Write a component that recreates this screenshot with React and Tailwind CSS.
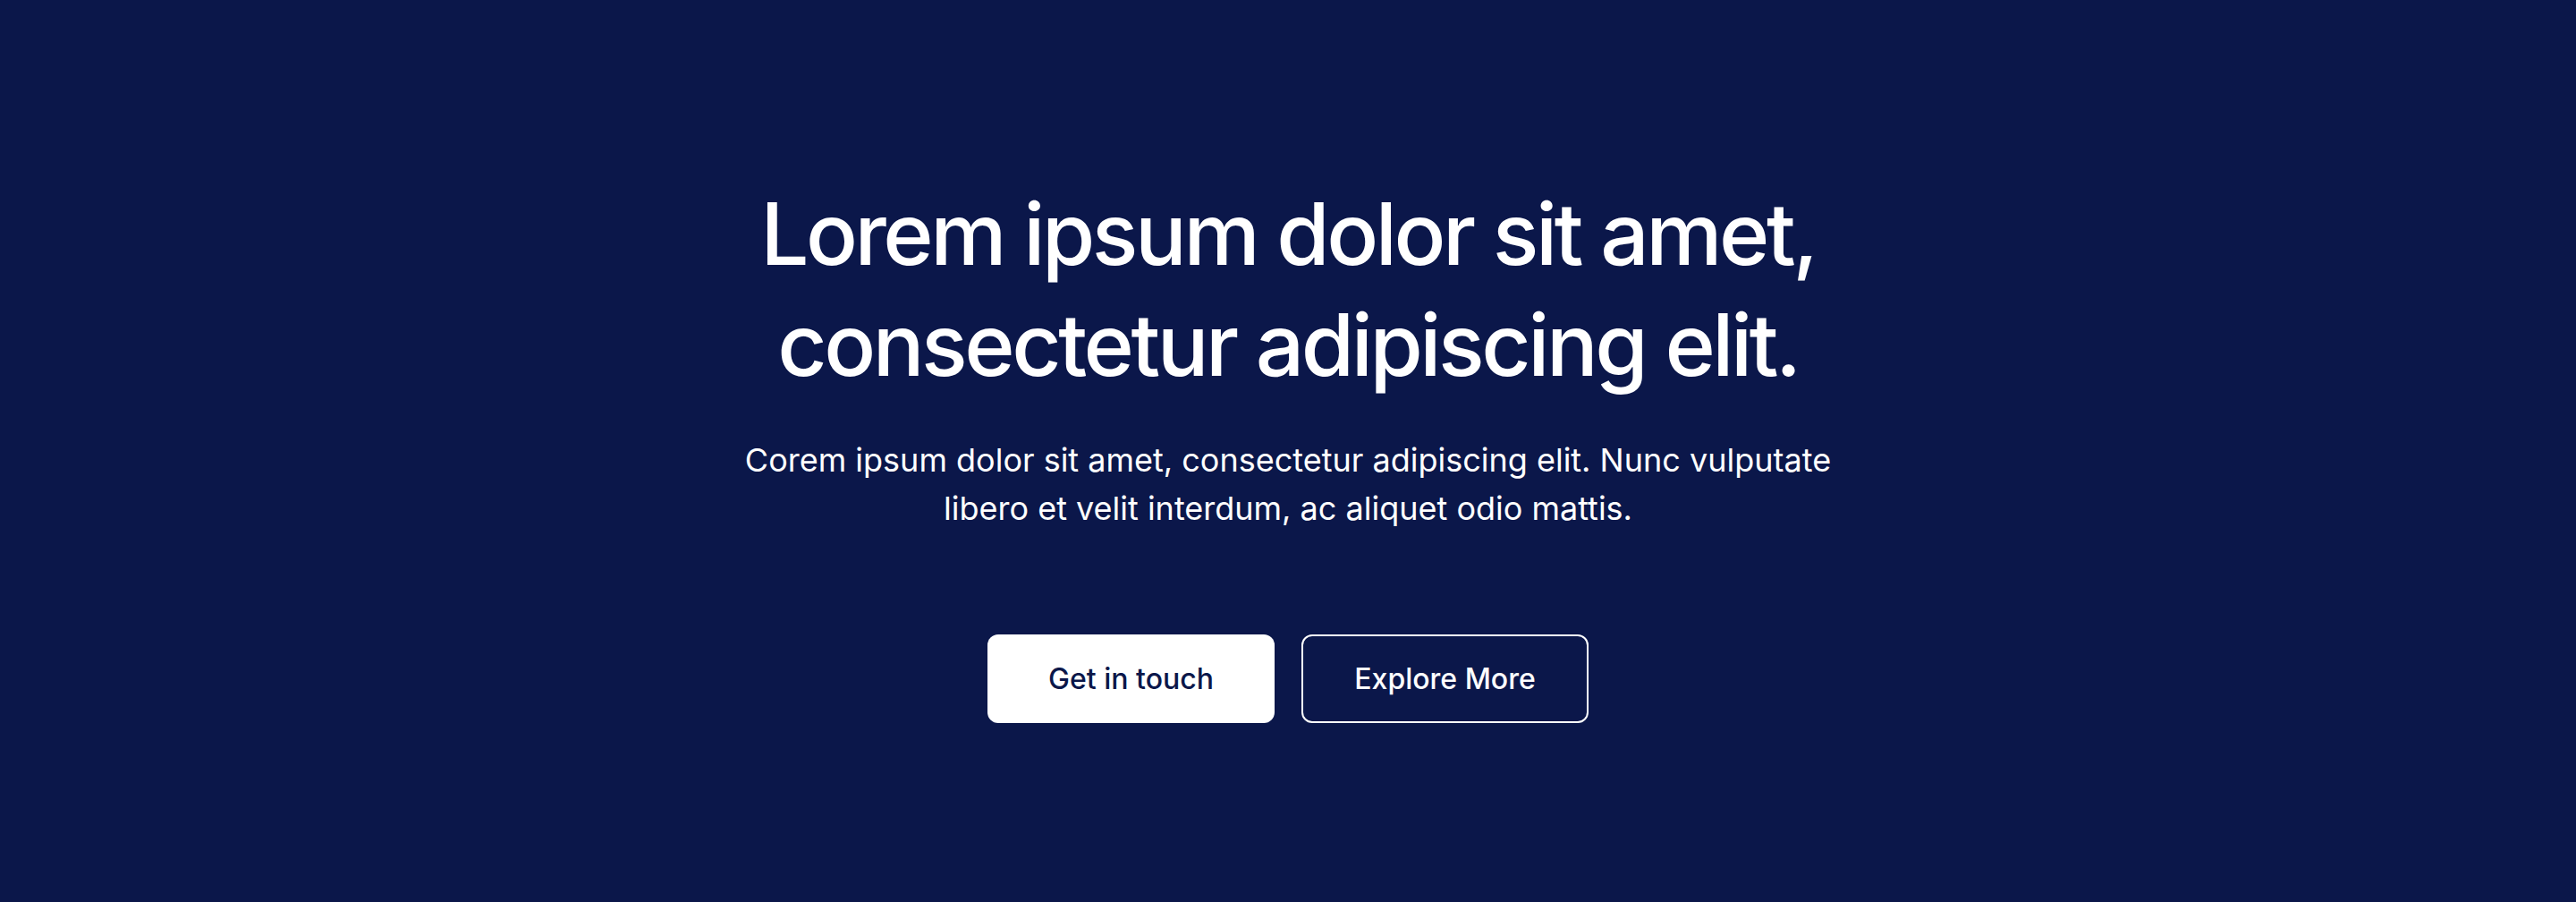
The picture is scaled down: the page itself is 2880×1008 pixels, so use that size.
import React from 'react';

const Hero = () => {
    return (
        <section className="min-h-[1008px] w-full bg-[#0b174a] flex flex-col items-center pt-[199px] font-['Inter',sans-serif] text-white">
            <h1 className="text-center text-[96px] leading-[124px] font-medium tracking-[-0.036em]">
                Lorem ipsum dolor sit amet,
                <br />
                consectetur adipiscing elit.
            </h1>
            <p className="mt-10 max-w-[1230px] text-center text-[36px] leading-[54px]">
                Corem ipsum dolor sit amet, consectetur adipiscing elit. Nunc vulputate libero et velit interdum, ac aliquet odio mattis.
            </p>
            <div className="mt-[114px] flex gap-[30px]">
                <button className="w-[321px] h-[99px] rounded-xl bg-white text-[#0b174a] text-[32px] font-medium">
                    Get in touch
                </button>
                <button className="w-[321px] h-[99px] rounded-xl border-2 border-white text-white text-[32px] font-medium">
                    Explore More
                </button>
            </div>
        </section>
    );
};

export default function App() {
    return <Hero />;
}
